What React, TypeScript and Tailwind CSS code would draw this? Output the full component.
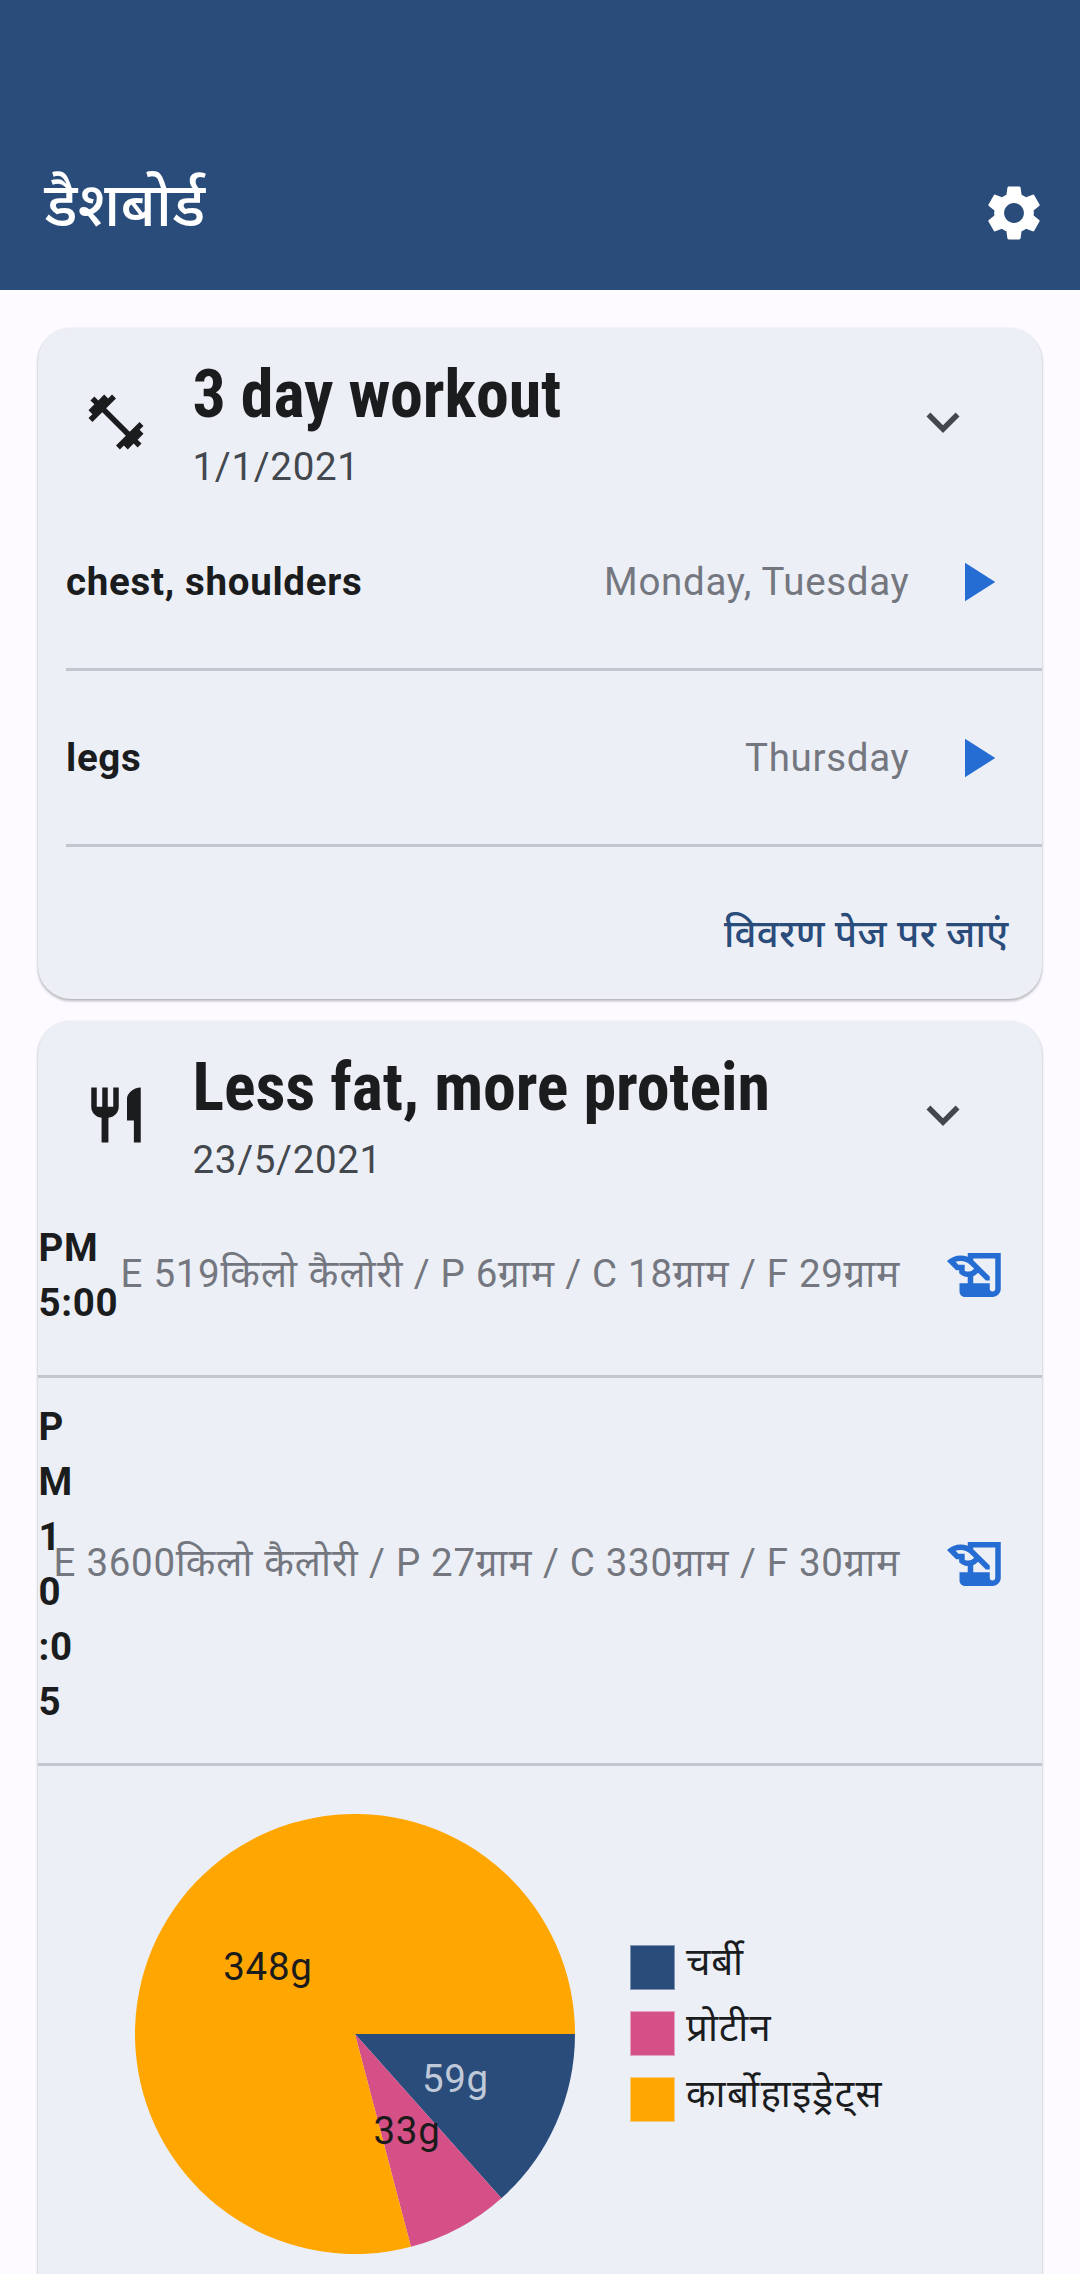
import type { ReactNode } from "react";
import {
  MdExpandMore,
  MdFitnessCenter,
  MdHistoryEdu,
  MdPlayArrow,
  MdRestaurant,
  MdSettings,
} from "react-icons/md";

const sessions = [
  { name: "chest, shoulders", days: "Monday, Tuesday" },
  { name: "legs", days: "Thursday" },
];

const meals = [
  {
    time: ["PM", "5:00"],
    summary: "E 519किलो कैलोरी / P 6ग्राम / C 18ग्राम / F 29ग्राम",
  },
  {
    time: ["P", "M", "1", "0", ":0", "5"],
    summary: "E 3600किलो कैलोरी / P 27ग्राम / C 330ग्राम / F 30ग्राम",
  },
];

const legend = [
  { label: "चर्बी", swatch: "bg-[#2a4c7b] border-[#8296b4]", spacing: "tracking-[0.69px]" },
  { label: "प्रोटीन", swatch: "bg-[#d45087] border-[#e3a3c2]", spacing: "tracking-[1.05px]" },
  { label: "कार्बोहाइड्रेट्स", swatch: "bg-[#ffa600] border-[#f5cb82]", spacing: "tracking-[1.45px]" },
];

const RADIUS = 220;

const slices = [
  { value: 59, color: "#2a4c7b", text: "#bfc9d7", label: "59g" },
  { value: 33, color: "#d45087", text: "#1b1b1b", label: "33g" },
  { value: 348, color: "#ffa600", text: "#1b1b1b", label: "348g" },
];

function Card({ className, children }: { className: string; children: ReactNode }) {
  return (
    <section
      className={`mx-[38px] overflow-hidden rounded-[33px] bg-[#eceff6] shadow-[0_2px_3px_rgba(0,0,0,0.28),0_0_2px_rgba(0,0,0,0.10)] ${className}`}
    >
      {children}
    </section>
  );
}

function CardHeader({ icon, title, date }: { icon: ReactNode; title: string; date: string }) {
  return (
    <div className="flex h-[187.5px] items-center pl-[44.5px] pr-[66px]">
      <div className="w-[110px] text-[66px]">{icon}</div>
      <div className="flex-1 pt-px">
        <h2 className="whitespace-nowrap text-[66px] font-bold leading-[88px] tracking-[-0.1px] [font-stretch:75%]">
          {title}
        </h2>
        <p className="leading-[55px] text-[#43474e]">{date}</p>
      </div>
      <MdExpandMore className="size-[66px] text-[#43474e]" />
    </div>
  );
}

function Divider({ className = "" }: { className?: string }) {
  return (
    <div className={`flex h-11 items-center ${className}`}>
      <div className="h-[3px] w-full bg-[#c4c6cf]" />
    </div>
  );
}

/** Sets Devanagari runs slightly wider than the Latin text around them. */
function MixedText({ text }: { text: string }) {
  return (
    <span className="whitespace-pre">
      {text.split(/([\u0900-\u097F]+(?: [\u0900-\u097F]+)*)/).map((run, i) =>
        i % 2 ? (
          <span key={i} className="tracking-[1.1px]">
            {run}
          </span>
        ) : (
          run
        ),
      )}
    </span>
  );
}

function PieChart() {
  const total = slices.reduce((sum, s) => sum + s.value, 0);
  let start = 0;
  const parts = slices.map((s) => {
    const end = start + (s.value / total) * Math.PI * 2;
    const mid = (start + end) / 2;
    const large = end - start > Math.PI ? 1 : 0;
    const point = (a: number, r: number) => [Math.cos(a) * r, Math.sin(a) * r];
    const [x1, y1] = point(start, RADIUS);
    const [x2, y2] = point(end, RADIUS);
    const [tx, ty] = point(mid, RADIUS / 2);
    start = end;
    return { ...s, d: `M0 0L${x1} ${y1}A${RADIUS} ${RADIUS} 0 ${large} 1 ${x2} ${y2}Z`, tx, ty };
  });
  return (
    <svg viewBox="-220 -220 440 440" className="size-[440px]">
      {parts.map((p) => (
        <path key={p.label} d={p.d} fill={p.color} />
      ))}
      {parts.map((p) => (
        <text key={p.label} x={p.tx} y={p.ty + 13.5} fill={p.text} textAnchor="middle">
          {p.label}
        </text>
      ))}
    </svg>
  );
}

export default function App() {
  return (
    <div className="h-[2274px] w-[1080px] overflow-hidden bg-[#fdfbff] font-['Roboto','Noto_Sans',sans-serif] text-[38.5px] tracking-[0.69px] text-[#1a1c1e]">
      <header className="flex h-[290px] justify-between bg-[#2a4c7b] pl-[44.5px] pr-[33px] pt-[136px] text-white">
        <h1 className="text-[60.5px] font-medium leading-[139px] tracking-[0.2px]">डैशबोर्ड</h1>
        <MdSettings className="mt-11 size-[66px]" />
      </header>

      <Card className="mt-[38px] h-[671px]">
        <CardHeader icon={<MdFitnessCenter />} title="3 day workout" date="1/1/2021" />
        {sessions.map((s) => (
          <div key={s.name} className="pl-7">
            <div className="flex h-[132px] items-center">
              <span className="flex-1 font-bold">{s.name}</span>
              <span className="text-[#74777f]">{s.days}</span>
              <div className="flex w-[132.5px] justify-center">
                <MdPlayArrow className="size-[66px] text-[#266dd3]" />
              </div>
            </div>
            <Divider />
          </div>
        ))}
        <div className="flex h-[132px] items-center justify-end pr-[33.5px] font-medium tracking-[0.4px] text-[#2a4c7b]">
          विवरण पेज पर जाएं
        </div>
      </Card>

      <Card className="mt-[22px] h-[1300px]">
        <CardHeader icon={<MdRestaurant />} title="Less fat, more protein" date="23/5/2021" />
        {meals.map((m) => (
          <div key={m.summary}>
            <div className="flex min-h-[132px] items-center">
              <div className="w-9 shrink-0 pl-[0.5px] font-bold leading-[55px]">
                {m.time.map((line, i) => (
                  <div key={i}>{line}</div>
                ))}
              </div>
              <div className="flex min-w-0 flex-1 justify-end pb-0.5 pr-[9px] text-[#74777f]">
                <MixedText text={m.summary} />
              </div>
              <div className="flex w-[132.5px] shrink-0 justify-center">
                <MdHistoryEdu className="size-[66px] text-[#266dd3]" />
              </div>
            </div>
            <Divider className="mt-[14px]" />
          </div>
        ))}
        <div className="flex items-center pl-[97px] pt-[27px]">
          <PieChart />
          <ul className="ml-[55px] flex flex-col gap-[21px]">
            {legend.map((l) => (
              <li key={l.label} className="flex h-[45px] items-center gap-[11px]">
                <span className={`size-[45px] border ${l.swatch}`} />
                <span className={`-mt-3 leading-[45px] ${l.spacing}`}>{l.label}</span>
              </li>
            ))}
          </ul>
        </div>
      </Card>
    </div>
  );
}
